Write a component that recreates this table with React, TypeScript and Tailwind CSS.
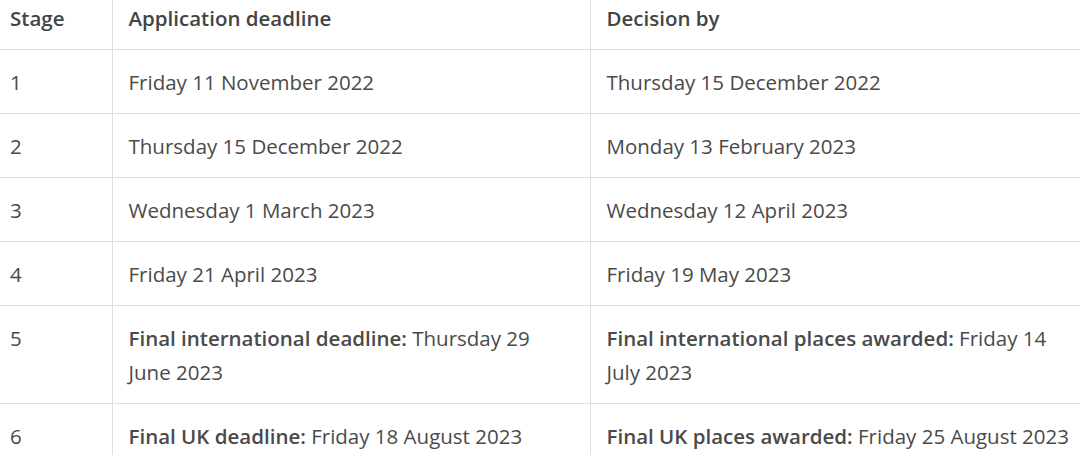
import React from 'react';

const rows = [
  { stage: '1', deadline: <>Friday 11 November 2022</>, decision: <>Thursday 15 December 2022</> },
  { stage: '2', deadline: <>Thursday 15 December 2022</>, decision: <>Monday 13 February 2023</> },
  { stage: '3', deadline: <>Wednesday 1 March 2023</>, decision: <>Wednesday 12 April 2023</> },
  { stage: '4', deadline: <>Friday 21 April 2023</>, decision: <>Friday 19 May 2023</> },
  {
    stage: '5',
    deadline: (
      <>
        <strong className="font-semibold">Final international deadline:</strong> Thursday 29
        <br />
        June 2023
      </>
    ),
    decision: (
      <>
        <strong className="font-semibold">Final international places awarded:</strong> Friday 14
        <br />
        July 2023
      </>
    )
  },
  {
    stage: '6',
    deadline: (
      <>
        <strong className="font-semibold">Final UK deadline:</strong> Friday 18 August 2023
      </>
    ),
    decision: (
      <>
        <strong className="font-semibold">Final UK places awarded:</strong> Friday 25 August 2023
      </>
    )
  }
];

export default function App() {
  return (
    <div
      className="w-[1080px] h-[455px] overflow-hidden bg-white text-[#4a4a4a]"
      style={{ fontFamily: '"Open Sans", "Noto Sans", sans-serif' }}
    >
      <table className="w-[1080px] table-fixed border-collapse text-[20.5px] leading-[34px] -mt-[13px]">
        <colgroup>
          <col className="w-[112px]" />
          <col className="w-[478px]" />
          <col className="w-[490px]" />
        </colgroup>
        <thead>
          <tr className="border-b border-[#e1ddd7]">
            <th className="pl-[10px] pr-4 pt-[14px] pb-[14px] text-left font-semibold text-[#444]">Stage</th>
            <th className="border-l border-[#e1ddd7] px-4 pt-[14px] pb-[14px] text-left font-semibold text-[#444]">
              Application deadline
            </th>
            <th className="border-l border-[#e1ddd7] px-4 pt-[14px] pb-[14px] text-left font-semibold text-[#444]">
              Decision by
            </th>
          </tr>
        </thead>
        <tbody>
          {rows.map((row) => (
            <tr key={row.stage} className="border-b border-[#e1ddd7] align-top">
              <td className="pl-[10px] pr-4 py-[14.5px]">{row.stage}</td>
              <td className="border-l border-[#e1ddd7] px-4 py-[14.5px]">{row.deadline}</td>
              <td className="border-l border-[#e1ddd7] pl-4 pr-0 py-[14.5px] whitespace-nowrap">{row.decision}</td>
            </tr>
          ))}
        </tbody>
      </table>
    </div>
  );
}
